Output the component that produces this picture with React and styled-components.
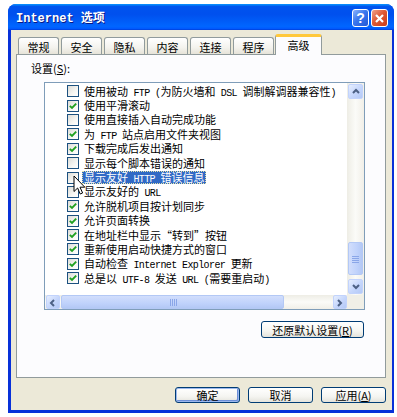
import React from 'react'
import styled, { createGlobalStyle, css } from 'styled-components'

const GlobalStyle = createGlobalStyle`
  html, body {
    margin: 0;
    padding: 0;
    background: #ffffff;
  }
  body {
    font-family: "Noto Sans CJK SC", "Noto Sans", sans-serif;
    font-size: 11px;
    color: #000;
  }
`

const Page = styled.div`
  padding: 4px 0 0 8px;
`

const Window = styled.div`
  width: 386px;
  height: 409px;
  display: flex;
  flex-direction: column;
  border-radius: 8px 8px 0 0;
  overflow: hidden;
  background: #0831d9;
`

const TitleBar = styled.div`
  height: 26px;
  flex: none;
  display: flex;
  align-items: center;
  justify-content: space-between;
  padding: 0 6px 0 8px;
  background: linear-gradient(#0997ff, #0053ee 10%, #0050ee 40%, #0066ff 86%, #005bff 94%, #003dd7);
`

const Title = styled.span`
  color: #fff;
  font-weight: bold;
  font-size: 12px;
  text-shadow: 1px 1px 0 #0a1883;
  letter-spacing: 0;
`

const TitleLatin = styled.span`
  font-family: "Liberation Mono", monospace;
  font-size: 12px;
  font-weight: bold;
`

const TitleButtons = styled.div`
  display: flex;
  gap: 2px;
  margin-top: 2px;
`

const TitleButton = styled.div`
  width: 17px;
  height: 18px;
  box-sizing: border-box;
  border: 1px solid #fff;
  border-radius: 3px;
  display: flex;
  align-items: center;
  justify-content: center;
  color: #fff;
  font-family: "Liberation Sans", sans-serif;
  font-weight: bold;
  font-size: 14px;
  ${(p) =>
    p.$close
      ? css`
          background: linear-gradient(135deg, #f0a08a, #e05a36 45%, #c93c17);
        `
      : css`
          background: linear-gradient(135deg, #8db4fb, #3b77ee 45%, #2257d6);
        `}
`

const Frame = styled.div`
  flex: 1;
  display: flex;
  padding: 0 3px 3px 3px;
`

const Body = styled.div`
  flex: 1;
  display: flex;
  flex-direction: column;
  background: #ece9d8;
  padding: 5px 6px 0 5px;
`

const TabRow = styled.div`
  height: 20px;
  display: flex;
  align-items: flex-end;
  gap: 2px;
  padding-left: 2px;
  margin-bottom: -1px;
`

const Tab = styled.div`
  box-sizing: border-box;
  display: flex;
  align-items: center;
  justify-content: center;
  border: 1px solid #919b9c;
  border-bottom: none;
  border-radius: 3px 3px 0 0;
  font-size: 11px;
  ${(p) =>
    p.$active
      ? css`
          position: relative;
          z-index: 2;
          width: 47px;
          height: 21px;
          margin-left: -1px;
          background: #fcfcfe;
          border-top: 3px solid #ffc83c;
          padding-bottom: 3px;
        `
      : css`
          width: 41px;
          height: 18px;
          background: linear-gradient(#ffffff, #f4f3ee 55%, #e4e1d5);
        `}
`

const Panel = styled.div`
  position: relative;
  z-index: 1;
  height: 324px;
  box-sizing: border-box;
  border: 1px solid #919b9c;
  background: #fcfcfe;
  padding: 6px 20px 0 14px;
  display: flex;
  flex-direction: column;
`

const Label = styled.div`
  height: 14px;
  line-height: 14px;
  font-size: 11px;
`

const Latin = styled.span`
  font-family: "Liberation Mono", monospace;
  font-size: 10px;
  letter-spacing: -0.6px;
`

const ListBox = styled.div`
  position: relative;
  margin: 7px 0 0 13px;
  width: 321px;
  height: 228px;
  box-sizing: border-box;
  border: 1px solid #7f9db9;
  background: #fff;
  display: flex;
  flex-direction: column;
`

const ListMain = styled.div`
  height: 212px;
  display: flex;
`

const ListArea = styled.div`
  flex: 1;
  padding: 0 0 0 22px;
  overflow: hidden;
`

const Row = styled.div`
  height: 14.4px;
  display: flex;
  align-items: center;
  white-space: nowrap;
  &:first-child {
    margin-top: 1px;
  }
`

const Box = styled.div`
  width: 12px;
  height: 12px;
  flex: none;
  box-sizing: border-box;
  border: 1px solid #1c5180;
  background: linear-gradient(135deg, #dcdcd7, #f6f6f3 60%, #ffffff);
  display: flex;
  align-items: center;
  justify-content: center;
  margin-right: 3px;
`

const ItemText = styled.span`
  height: 13px;
  line-height: 13px;
  padding: 0 2px;
  box-sizing: border-box;
  font-size: 11px;
  ${(p) =>
    p.$selected &&
    css`
      background: #316ac5;
      color: #fff;
      outline: 1px dotted #e6e3a8;
      outline-offset: -1px;
    `}
`

const VScroll = styled.div`
  width: 17px;
  flex: none;
  display: flex;
  flex-direction: column;
  padding: 1px 1px 1px 1px;
  box-sizing: border-box;
  background: linear-gradient(to right, #eeede5, #fbfbf8 50%, #f1efe8);
`

const ScrollButton = styled.div`
  width: 15px;
  height: 15px;
  flex: none;
  box-sizing: border-box;
  border: 1px solid #c2d3fc;
  border-radius: 2px;
  background: linear-gradient(135deg, #e6eefe, #c5d6fc 55%, #b4c9f6);
  display: flex;
  align-items: center;
  justify-content: center;
`

const VTrack = styled.div`
  flex: 1;
  display: flex;
  flex-direction: column;
  justify-content: flex-end;
  padding-bottom: 4px;
`

const Thumb = styled.div`
  box-sizing: border-box;
  border: 1px solid #b3c8f5;
  border-radius: 2px;
  background: ${(p) =>
    p.$horizontal
      ? 'linear-gradient(#d2defc, #c0d2fb 60%, #b3c8f5)'
      : 'linear-gradient(to right, #d2defc, #c0d2fb 60%, #b3c8f5)'};
  display: flex;
  align-items: center;
  justify-content: center;
  ${(p) =>
    p.$horizontal
      ? css`
          height: 14px;
          width: 223px;
          margin-left: 1px;
        `
      : css`
          height: 33px;
          width: 15px;
        `}
`

const HScroll = styled.div`
  height: 14px;
  display: flex;
  background: linear-gradient(#eeede5, #fbfbf8 50%, #f1efe8);
`

const HTrack = styled.div`
  flex: 1;
  display: flex;
`

const HButton = styled(ScrollButton)`
  height: 14px;
  width: 14px;
  margin-left: ${(p) => (p.$first ? '1px' : '0')};
`

const Corner = styled.div`
  width: 17px;
  flex: none;
  background: #f0efe7;
`

const Cursor = styled.svg`
  position: absolute;
  left: 28px;
  top: 92px;
`

const ResetRow = styled.div`
  display: flex;
  justify-content: flex-end;
  margin-top: 11px;
  padding-right: 1px;
`

const Button = styled.div`
  box-sizing: border-box;
  height: ${(p) => p.$h || 16}px;
  width: ${(p) => p.$w || 65}px;
  border: 1px solid #003c74;
  border-radius: 3px;
  background: linear-gradient(#ffffff, #f5f5f1 60%, #e4e3dc);
  display: flex;
  align-items: center;
  justify-content: center;
  font-size: 11px;
  ${(p) =>
    p.$default &&
    css`
      box-shadow: inset 0 0 0 1px #9cb8ee, inset -1px -1px 0 1px #6d8fd9;
    `}
`

const ButtonRow = styled.div`
  display: flex;
  justify-content: flex-end;
  gap: 8px;
  margin-top: 9px;
`

const Chevron = ({ dir }) => {
  const pts = {
    up: '3,7 6,4 9,7',
    down: '3,4 6,7 9,4',
    left: '7,3 4,6 7,9',
    right: '4,3 7,6 4,9',
  }[dir]
  return (
    <svg width="12" height="11" viewBox="0 0 12 11">
      <polyline points={pts} fill="none" stroke="#4d6185" strokeWidth="2" />
    </svg>
  )
}

const Check = () => (
  <svg width="10" height="10" viewBox="0 0 10 10">
    <polyline points="1.8,4.8 4,7 8.2,2.6" fill="none" stroke="#21a121" strokeWidth="1.9" />
  </svg>
)

const withLatin = (text) =>
  text.split(/([\x20-\x7e]+)/).map((part, i) =>
    /[\x21-\x7e]/.test(part) ? <Latin key={i}>{part}</Latin> : part
  )

const items = [
  { text: '使用被动 FTP (为防火墙和 DSL 调制解调器兼容性)', on: false },
  { text: '使用平滑滚动', on: true },
  { text: '使用直接插入自动完成功能', on: false },
  { text: '为 FTP 站点启用文件夹视图', on: true },
  { text: '下载完成后发出通知', on: true },
  { text: '显示每个脚本错误的通知', on: false },
  { text: '显示友好 HTTP 错误信息', on: false, selected: true },
  { text: '显示友好的 URL', on: false },
  { text: '允许脱机项目按计划同步', on: true },
  { text: '允许页面转换', on: true },
  { text: '在地址栏中显示“转到”按钮', on: true },
  { text: '重新使用启动快捷方式的窗口', on: true },
  { text: '自动检查 Internet Explorer 更新', on: true },
  { text: '总是以 UTF-8 发送 URL (需要重启动)', on: true },
]

const tabs = ['常规', '安全', '隐私', '内容', '连接', '程序', '高级']

export default function App() {
  return (
    <>
      <GlobalStyle />
      <Page>
        <Window>
          <TitleBar>
            <Title>
              <TitleLatin>Internet </TitleLatin>选项
            </Title>
            <TitleButtons>
              <TitleButton>?</TitleButton>
              <TitleButton $close>
                <svg width="11" height="11" viewBox="0 0 11 11">
                  <path d="M2 2 L9 9 M9 2 L2 9" stroke="#fff" strokeWidth="2.2" />
                </svg>
              </TitleButton>
            </TitleButtons>
          </TitleBar>
          <Frame>
            <Body>
              <TabRow>
                {tabs.map((t, i) => (
                  <Tab key={t} $active={i === tabs.length - 1}>
                    {t}
                  </Tab>
                ))}
              </TabRow>
              <Panel>
                <Label>
                  设置(<u>S</u>):
                </Label>
                <ListBox>
                  <ListMain>
                    <ListArea>
                      {items.map((it) => (
                        <Row key={it.text}>
                          <Box>{it.on && <Check />}</Box>
                          <ItemText $selected={it.selected}>{withLatin(it.text)}</ItemText>
                        </Row>
                      ))}
                    </ListArea>
                    <VScroll>
                      <ScrollButton>
                        <Chevron dir="up" />
                      </ScrollButton>
                      <VTrack>
                        <Thumb>
                          <svg width="7" height="8" viewBox="0 0 7 8">
                            <path d="M0 1.5H7M0 3.5H7M0 5.5H7M0 7.5H7" stroke="#8aa6e8" strokeWidth="1" />
                          </svg>
                        </Thumb>
                      </VTrack>
                      <ScrollButton>
                        <Chevron dir="down" />
                      </ScrollButton>
                    </VScroll>
                  </ListMain>
                  <HScroll>
                    <HButton $first>
                      <Chevron dir="left" />
                    </HButton>
                    <HTrack>
                      <Thumb $horizontal>
                        <svg width="8" height="7" viewBox="0 0 8 7">
                          <path d="M1.5 0V7M3.5 0V7M5.5 0V7M7.5 0V7" stroke="#8aa6e8" strokeWidth="1" />
                        </svg>
                      </Thumb>
                    </HTrack>
                    <HButton>
                      <Chevron dir="right" />
                    </HButton>
                    <Corner />
                  </HScroll>
                  <Cursor width="13" height="21" viewBox="0 0 13 21">
                    <path
                      d="M1 1 L1 16.5 L4.6 13 L7.2 19 L9.6 18 L7 12.2 L11.8 12.2 Z"
                      fill="#fff"
                      stroke="#000"
                      strokeWidth="1"
                      strokeLinejoin="round"
                    />
                  </Cursor>
                </ListBox>
                <ResetRow>
                  <Button $w={103} $h={17}>
                    还原默认设置(<u>R</u>)
                  </Button>
                </ResetRow>
              </Panel>
              <ButtonRow>
                <Button $default>确定</Button>
                <Button>取消</Button>
                <Button>
                  应用(<u>A</u>)
                </Button>
              </ButtonRow>
            </Body>
          </Frame>
        </Window>
      </Page>
    </>
  )
}
